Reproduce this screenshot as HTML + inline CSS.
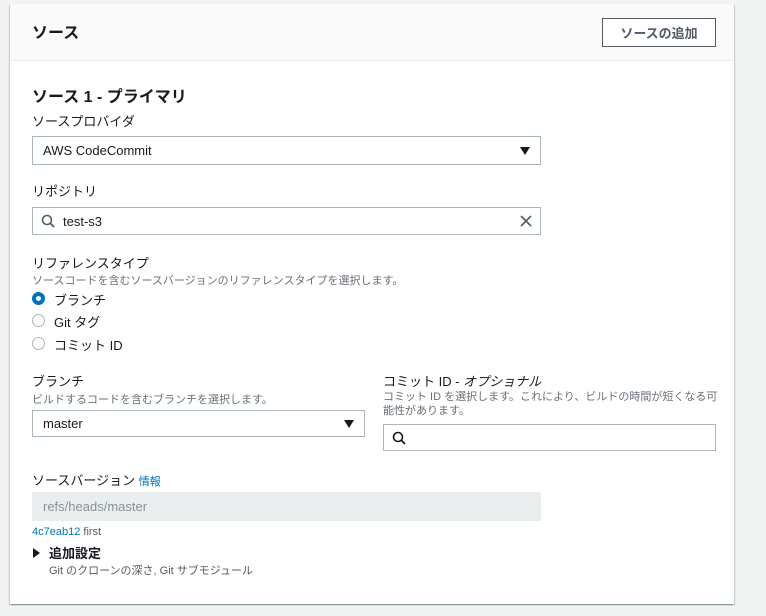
<!DOCTYPE html>
<html><head><meta charset="utf-8"><style>
*{box-sizing:border-box;margin:0;padding:0}
body{width:766px;height:616px;background:#f2f3f3;font-family:"Liberation Sans","Noto Sans CJK JP",sans-serif;color:#16191f;position:relative;overflow:hidden}
.card{position:absolute;left:10px;top:4px;width:724px;height:600px;background:#fff;box-shadow:0 1px 1px rgba(0,28,36,.3),1px 1px 1px rgba(0,28,36,.15),-1px 1px 1px rgba(0,28,36,.15)}
.hdr{position:absolute;left:0;top:0;width:724px;height:57px;background:#fafafa;border-bottom:1px solid #eaeded}
.a{position:absolute;white-space:nowrap}
.h{font-size:16px;font-weight:bold}
.l{font-size:13px}
.d{font-size:11px;color:#687078}
.box{position:absolute;border:1px solid #aab7b8;background:#fff;font-size:13px;padding-left:10px;display:flex;align-items:center}
.btn{position:absolute;left:592px;top:14px;width:114px;height:29px;border:1px solid #545b64;font-size:13px;font-weight:bold;color:#545b64;display:flex;align-items:center;justify-content:center;background:#fff}
.tri{position:absolute;right:10px;top:50%;margin-top:-4px;width:0;height:0;border-left:5px solid transparent;border-right:5px solid transparent;border-top:8px solid #16191f}
.r{position:absolute;width:13px;height:13px;border-radius:50%;border:1px solid #aab7b8;background:#fff}
</style></head><body>
<div class="card">
<div class="hdr"></div>
<div class="a h" style="left:22px;top:15px">ソース</div>
<div class="btn">ソースの追加</div>
<div class="a h" style="left:22px;top:79px">ソース 1 - プライマリ</div>
<div class="a l" style="left:22px;top:107px">ソースプロバイダ</div>
<div class="box" style="left:22px;top:132px;width:509px;height:29px">AWS CodeCommit<div class="tri"></div></div>
<div class="a l" style="left:22px;top:177px">リポジトリ</div>
<div class="box" style="left:22px;top:203px;width:509px;height:28px;padding-left:8px">
<svg width="14" height="14" viewBox="0 0 14 14" style="margin-right:8px"><circle cx="6" cy="6" r="4.5" fill="none" stroke="#545b64" stroke-width="1.6"/><path d="M9.3 9.3L13 13" stroke="#545b64" stroke-width="1.8"/></svg>test-s3
<svg width="12" height="12" viewBox="0 0 12 12" style="position:absolute;right:8px;top:7px"><path d="M1 1L11 11M11 1L1 11" stroke="#545b64" stroke-width="1.6"/></svg></div>
<div class="a l" style="left:22px;top:249px">リファレンスタイプ</div>
<div class="a d" style="left:22px;top:268px">ソースコードを含むソースバージョンのリファレンスタイプを選択します。</div>
<div class="r" style="left:22px;top:288px;border:4px solid #0073bb"></div>
<div class="a l" style="left:44px;top:286px">ブランチ</div>
<div class="r" style="left:22px;top:310px"></div>
<div class="a l" style="left:44px;top:308px">Git タグ</div>
<div class="r" style="left:22px;top:333px"></div>
<div class="a l" style="left:44px;top:331px">コミット ID</div>
<div class="a l" style="left:22px;top:367px">ブランチ</div>
<div class="a d" style="left:22px;top:387px">ビルドするコードを含むブランチを選択します。</div>
<div class="box" style="left:22px;top:406px;width:333px;height:27px">master<div class="tri"></div></div>
<div class="a l" style="left:373px;top:367px;font-style:italic"><span style="font-style:normal">コミット ID - </span>オプショナル</div>
<div class="a d" style="left:373px;top:386px;white-space:normal;width:335px;line-height:14px">コミット ID を選択します。これにより、ビルドの時間が短くなる可能性があります。</div>
<div class="box" style="left:373px;top:420px;width:333px;height:27px;padding-left:8px">
<svg width="14" height="14" viewBox="0 0 14 14"><circle cx="6" cy="6" r="4.5" fill="none" stroke="#16191f" stroke-width="1.6"/><path d="M9.3 9.3L13 13" stroke="#16191f" stroke-width="1.8"/></svg></div>
<div class="a l" style="left:22px;top:466px">ソースバージョン <span style="font-size:11px;color:#0073bb">情報</span></div>
<div class="box" style="left:22px;top:488px;width:509px;height:29px;background:#eaeded;border-color:#eaeded;color:#879596">refs/heads/master</div>
<div class="a" style="left:22px;top:522px;font-size:11px;color:#0073bb">4c7eab12 <span style="color:#545b64">first</span></div>
<div class="a" style="left:23px;top:544px;width:0;height:0;border-top:5px solid transparent;border-bottom:5px solid transparent;border-left:7px solid #16191f"></div>
<div class="a" style="left:39px;top:539px;font-size:13px;font-weight:bold">追加設定</div>
<div class="a" style="left:39px;top:558px;font-size:11px;color:#545b64">Git のクローンの深さ, Git サブモジュール</div>
</div>
</body></html>
